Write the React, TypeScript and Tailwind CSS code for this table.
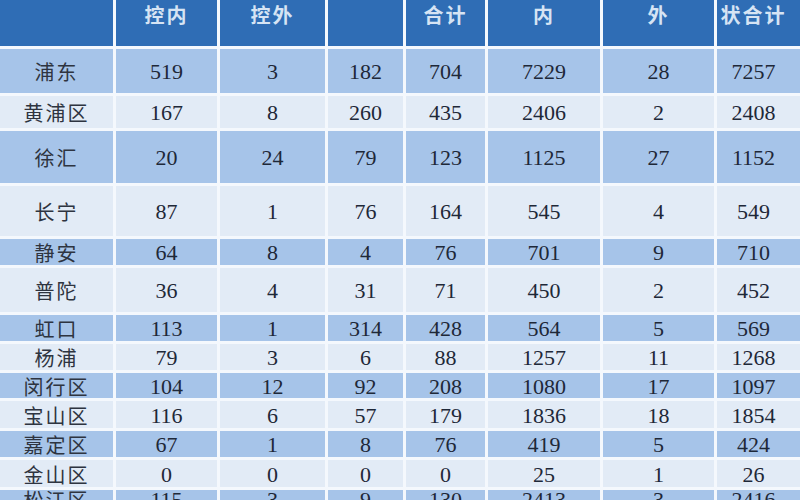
import React from "react";

const headers = ["", "控内", "控外", "", "合计", "内", "外", "状合计"];

const rows = [
  { name: "浦东", h: "h-[44px]", v: ["519", "3", "182", "704", "7229", "28", "7257"] },
  { name: "黄浦区", h: "h-[32px]", v: ["167", "8", "260", "435", "2406", "2", "2408"] },
  { name: "徐汇", h: "h-[52px]", v: ["20", "24", "79", "123", "1125", "27", "1152"] },
  { name: "长宁", h: "h-[50px]", v: ["87", "1", "76", "164", "545", "4", "549"] },
  { name: "静安", h: "h-[26px]", v: ["64", "8", "4", "76", "701", "9", "710"] },
  { name: "普陀", h: "h-[44px]", v: ["36", "4", "31", "71", "450", "2", "452"] },
  { name: "虹口", h: "h-[26px]", v: ["113", "1", "314", "428", "564", "5", "569"] },
  { name: "杨浦", h: "h-[26px]", v: ["79", "3", "6", "88", "1257", "11", "1268"] },
  { name: "闵行区", h: "h-[25px]", v: ["104", "12", "92", "208", "1080", "17", "1097"] },
  { name: "宝山区", h: "h-[27px]", v: ["116", "6", "57", "179", "1836", "18", "1854"] },
  { name: "嘉定区", h: "h-[26px]", v: ["67", "1", "8", "76", "419", "5", "424"] },
  { name: "金山区", h: "h-[27px]", v: ["0", "0", "0", "0", "25", "1", "26"] },
  { name: "松江区", h: "h-[26px]", v: ["115", "3", "9", "130", "2413", "3", "2416"] },
];

const cols = "grid grid-cols-[113px_101px_105px_75px_79px_112px_111px_83px] gap-x-[3px]";

export default function App() {
  return (
    <div className="w-[800px] h-[500px] overflow-hidden bg-[#f4f8fd] flex flex-col gap-y-[3px]">
      <div className={`${cols} h-[46px] shrink-0`}>
        {headers.map((t, i) => (
          <div
            key={i}
            className={`bg-[#2f6db5] flex justify-center pt-[1px] text-[20px] leading-[28px] font-bold tracking-[2px] text-[#d6e4f4] ${i === 7 ? "pr-[10px]" : ""}`}
            style={{ fontFamily: '"Noto Sans CJK SC", sans-serif' }}
          >
            {t}
          </div>
        ))}
      </div>
      {rows.map((r, ri) => {
        const bg = ri % 2 === 0 ? "bg-[#a6c4e9]" : "bg-[#e2ebf6]";
        const last = ri === rows.length - 1;
        const align = last ? "items-start" : "items-center pt-[2px]";
        return (
          <div key={r.name} className={`${cols} ${r.h} shrink-0`}>
            <div
              className={`${bg} flex ${align} justify-center text-[20px] leading-[20px] tracking-[2px] text-[#2e3440]`}
              style={{ fontFamily: '"Noto Sans CJK SC", sans-serif' }}
            >
              {r.name}
            </div>
            {r.v.map((v, i) => (
              <div
                key={i}
                className={`${bg} flex ${align} justify-center text-[22px] leading-[20px] text-[#1e2838] ${i === 6 ? "pr-[10px]" : ""}`}
                style={{ fontFamily: '"Liberation Serif", serif' }}
              >
                {v}
              </div>
            ))}
          </div>
        );
      })}
    </div>
  );
}
